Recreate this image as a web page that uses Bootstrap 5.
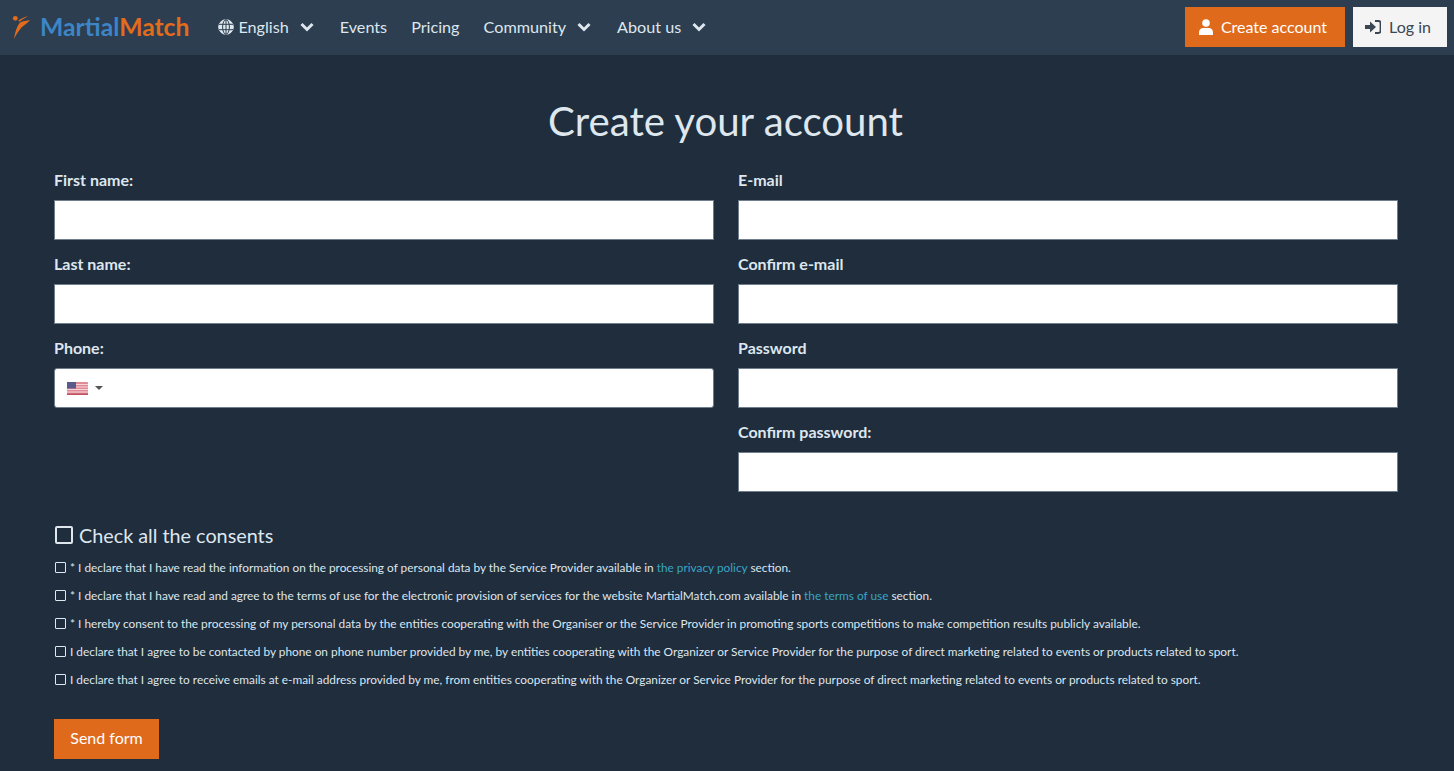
<!DOCTYPE html>
<html lang="en"><head><meta charset="utf-8"><title>Create account</title>
<link rel="stylesheet" href="https://cdn.jsdelivr.net/npm/bootstrap@5.3.0/dist/css/bootstrap.min.css">
<style>
html,body{height:771px;overflow:hidden}
body{background:#1f2d3d;color:#dee6ee;font-family:Lato,"Liberation Sans",sans-serif;font-size:16px}
.topbar{height:55px;background:#2c3e50;padding:0 7px 1px 11px}
.brand-word{font-size:24.7px;font-weight:700;line-height:1;color:#3d85c6;text-decoration:none;margin-left:9px;margin-right:29px}
.brand-word span{color:#e36b1c}
.top-link{color:#dee6ee;text-decoration:none;font-size:16.2px;margin-right:24px}
.top-link.has-menu{margin-right:26px}
.top-link svg{display:block}
.globe-mark{margin-right:4px}
.chev{margin-left:11px}
.btn-orange{background:#e06a1b;color:#fff;border:0;border-radius:0;height:40px;font-size:16px;padding:0}
.btn-orange:hover{background:#e06a1b;color:#fff}
.create-btn{width:160px;padding-right:4px}
.btn-pale{background:#f4f4f4;color:#3b4652;border:0;border-radius:0;height:40px;font-size:16px;width:94px;padding:0 4px 0 0}
.page-pad{padding:0 56px 0 54px}
.page-title{font-size:40.2px;font-weight:400;line-height:48px;text-align:center;margin:42px 0 0;color:#dee6ee;padding-right:1px}
.form-area{margin-top:23px}
.two-col{display:grid;grid-template-columns:660px 660px;column-gap:24px}
.fld{height:84px}
.fld label{display:block;font-weight:700;font-size:16px;line-height:20px;height:32px;padding-top:2px;margin:0;color:#dee6ee}
.fld .form-control{height:40px;border-radius:0;background:#fff;border:1px solid #6f7d8c}
.phone-box{height:40px;background:#fff;border:1px solid #6f7d8c;border-radius:3px;padding-left:12px;gap:7px}
.caret-dn{width:0;height:0;border-left:4px solid transparent;border-right:4px solid transparent;border-top:4px solid #555}
.all-line{font-size:19.8px;line-height:24px;margin-top:19px;gap:6px;color:#dee6ee}
.box-big{width:18px;height:18px;border:2px solid #dee6ee;border-radius:2px;flex:none;margin-left:1px}
.box-small{width:11px;height:11px;border:1px solid #dee6ee;border-radius:1px;flex:none;margin:-1px 0 0 1px}
.consents{margin-top:7px}
.consent-line{font-size:11.85px;line-height:28px;height:28px;gap:4px;white-space:nowrap;color:#dee6ee}
.consent-line a{color:#3ba4c4;text-decoration:none}
.send-btn{margin-top:25px;height:40px;width:105px;padding-bottom:2px}
</style></head><body>
<nav class="topbar d-flex align-items-center">
  <a class="d-flex align-items-center text-decoration-none" href="#">
    <svg width="20" height="26" viewBox="-1 -1 20 26" fill="#e36b1c"><circle cx="3.300" cy="3.300" r="2.400"/><path d="M2 24C3 17 5 11 8 7.500 11 6 15 5.500 18 5 16 8 12 10 9.500 12.500 6.500 16 4 20 2 24Z"/><path d="M6 6C8 4 12 2 16 1 13 3 10 4.500 8 6.500Z"/></svg>
  </a>
  <a class="brand-word" href="#">Martial<span>Match</span></a>
  <a class="top-link has-menu d-flex align-items-center" href="#"><svg class="globe-mark" width="16" height="16" viewBox="0 0 16 16" fill="none" stroke="#dee6ee"><circle cx="8" cy="8" r="7.300" fill="#dee6ee"/><g stroke="#2c3e50" stroke-width="1"><ellipse cx="8" cy="8" rx="3.400" ry="7.300"/><path d="M1 5.300h14M1 10.700h14M8 .7v14.600"/></g></svg>English<svg class="chev" width="14" height="10" viewBox="0 0 14 10" fill="none" stroke="#dee6ee" stroke-width="3"><path d="M1.500 2 7 7.500 12.500 2"/></svg></a>
  <a class="top-link" href="#">Events</a>
  <a class="top-link" href="#">Pricing</a>
  <a class="top-link has-menu d-flex align-items-center" href="#">Community<svg class="chev" width="14" height="10" viewBox="0 0 14 10" fill="none" stroke="#dee6ee" stroke-width="3"><path d="M1.500 2 7 7.500 12.500 2"/></svg></a>
  <a class="top-link has-menu d-flex align-items-center" href="#">About us<svg class="chev" width="14" height="10" viewBox="0 0 14 10" fill="none" stroke="#dee6ee" stroke-width="3"><path d="M1.500 2 7 7.500 12.500 2"/></svg></a>
  <div class="ms-auto d-flex gap-2">
    <button class="btn btn-orange create-btn d-flex align-items-center justify-content-center" type="button"><svg class="me-2" width="14" height="16" viewBox="0 0 14 16" fill="#fff"><circle cx="7" cy="4" r="3.800"/><path d="M0 16v-2.500C0 10.500 2 9 4 9h6c2 0 4 1.500 4 4.500V16Z"/></svg>Create account</button>
    <button class="btn btn-pale d-flex align-items-center justify-content-center" type="button"><svg class="me-2" width="16" height="14" viewBox="0 0 16 14" fill="#3b4652"><path d="M0 5h5V1.500L11 7 5 12.500V9H0Z"/><path d="M10 1h3.500A2 2 0 0 1 15.500 3v8a2 2 0 0 1-2 2H10" fill="none" stroke="#3b4652" stroke-width="1.800"/></svg>Log in</button>
  </div>
</nav>
<main class="page-pad">
  <h1 class="page-title">Create your account</h1>
  <form class="form-area">
    <div class="two-col">
      <div>
        <div class="fld"><label>First name:</label><input class="form-control" type="text"></div>
        <div class="fld"><label>Last name:</label><input class="form-control" type="text"></div>
        <div class="fld"><label>Phone:</label><div class="phone-box d-flex align-items-center">
          <svg width="21" height="13" viewBox="0 0 21 13"><rect width="21" height="13" rx="1" fill="#e08a96"/><path d="M0 2.500h21M0 5h21M0 7.500h21M0 10h21" stroke="#f6d5da" stroke-width="1"/><rect y="11.500" width="21" height="1.500" fill="#c0505f"/><rect width="9" height="6.500" fill="#5a5a8c"/></svg><span class="caret-dn"></span></div></div>
      </div>
      <div>
        <div class="fld"><label>E-mail</label><input class="form-control" type="text"></div>
        <div class="fld"><label>Confirm e-mail</label><input class="form-control" type="text"></div>
        <div class="fld"><label>Password</label><input class="form-control" type="password"></div>
        <div class="fld"><label>Confirm password:</label><input class="form-control" type="password"></div>
      </div>
    </div>
    <div class="all-line d-flex align-items-center"><span class="box-big"></span>Check all the consents</div>
    <div class="consents">
      <div class="consent-line d-flex align-items-center"><span class="box-small"></span><span>* I declare that I have read the information on the processing of personal data by the Service Provider available in <a href="#">the privacy policy</a> section.</span></div>
      <div class="consent-line d-flex align-items-center"><span class="box-small"></span><span>* I declare that I have read and agree to the terms of use for the electronic provision of services for the website MartialMatch.com available in <a href="#">the terms of use</a> section.</span></div>
      <div class="consent-line d-flex align-items-center"><span class="box-small"></span><span>* I hereby consent to the processing of my personal data by the entities cooperating with the Organiser or the Service Provider in promoting sports competitions to make competition results publicly available.</span></div>
      <div class="consent-line d-flex align-items-center"><span class="box-small"></span><span>I declare that I agree to be contacted by phone on phone number provided by me, by entities cooperating with the Organizer or Service Provider for the purpose of direct marketing related to events or products related to sport.</span></div>
      <div class="consent-line d-flex align-items-center"><span class="box-small"></span><span>I declare that I agree to receive emails at e-mail address provided by me, from entities cooperating with the Organizer or Service Provider for the purpose of direct marketing related to events or products related to sport.</span></div>
    </div>
    <button class="btn btn-orange send-btn" type="button">Send form</button>
  </form>
</main>
<script src="https://cdn.jsdelivr.net/npm/bootstrap@5.3.0/dist/js/bootstrap.bundle.min.js"></script>
</body></html>
